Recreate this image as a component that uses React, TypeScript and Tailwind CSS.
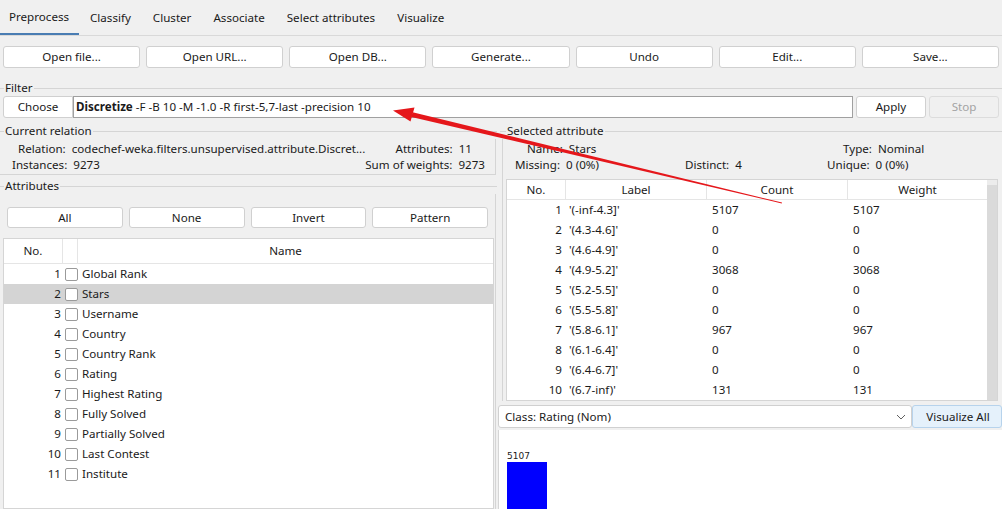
import React from 'react';

const tabs = ['Preprocess', 'Classify', 'Cluster', 'Associate', 'Select attributes', 'Visualize'];
const topButtons = ['Open file...', 'Open URL...', 'Open DB...', 'Generate...', 'Undo', 'Edit...', 'Save...'];
const attrs = [
  'Global Rank', 'Stars', 'Username', 'Country', 'Country Rank', 'Rating',
  'Highest Rating', 'Fully Solved', 'Partially Solved', 'Last Contest', 'Institute',
];
const bins = [
  ["'(-inf-4.3]'", '5107'],
  ["'(4.3-4.6]'", '0'],
  ["'(4.6-4.9]'", '0'],
  ["'(4.9-5.2]'", '3068'],
  ["'(5.2-5.5]'", '0'],
  ["'(5.5-5.8]'", '0'],
  ["'(5.8-6.1]'", '967'],
  ["'(6.1-6.4]'", '0'],
  ["'(6.4-6.7]'", '0'],
  ["'(6.7-inf)'", '131'],
];

function Btn({ label, className = '' }: { label: string; className?: string }) {
  return (
    <div className={`h-[22px] flex items-center justify-center bg-white border border-[#d0d0d0] rounded-[3px] text-[#1a1a1a] ${className}`}>
      {label}
    </div>
  );
}

function Title({ label, lead = 'w-[4px]' }: { label: string; lead?: string }) {
  return (
    <div className="flex items-center h-[16px]">
      <div className={`${lead} h-px bg-[#d5d5d5]`} />
      <span className="px-[1px] text-[#1a1a1a]">{label}</span>
      <div className="flex-1 h-px bg-[#d5d5d5]" />
    </div>
  );
}

function Arrow() {
  return (
    <svg className="absolute left-0 top-0 pointer-events-none" width="1002" height="509">
      <polygon points="412.6,112.2 782,202.6 781.8,203.4 411.4,117" fill="#e5171b" />
      <polygon points="393,110.5 414.5,107.5 410.5,121.5" fill="#e5171b" />
    </svg>
  );
}

export default function App() {
  return (
    <div className="relative w-[1002px] h-[509px] overflow-hidden bg-[#f0f0f0] font-['Noto_Sans',sans-serif] text-[11.6px] leading-none text-[#1a1a1a]">
      {/* tabs */}
      <div className="flex h-[36px] border-b border-[#d9d9d9]">
        {tabs.map((t, i) => (
          <div
            key={t}
            className={`flex items-center h-full ${i === 0 ? 'pl-[9px] pr-[10px] border-b-2 border-[#4a7db3]' : 'px-[11px]'}`}
          >
            {t}
          </div>
        ))}
      </div>

      {/* open buttons */}
      <div className="flex gap-[6px] px-[3px] pt-[10px]">
        {topButtons.map((b) => (
          <Btn key={b} label={b} className="flex-1" />
        ))}
      </div>

      {/* filter */}
      <div className="mt-[12px]">
        <Title label="Filter" />
        <div className="flex items-center px-[3px] h-[22px]">
          <Btn label="Choose" className="w-[70px] rounded-r-none" />
          <div className="flex-1 h-[22px] bg-white border border-[#a0a0a0] flex items-center px-[2px] whitespace-nowrap">
            <span className="font-bold">Discretize</span>
            <span>&nbsp;-F -B 10 -M -1.0 -R first-5,7-last -precision 10</span>
          </div>
          <Btn label="Apply" className="w-[70px] ml-[3px]" />
          <div className="w-[70px] ml-[3px] h-[22px] flex items-center justify-center border border-[#dcdcdc] rounded-[3px] text-[#a3a3a3]">
            Stop
          </div>
        </div>
      </div>

      {/* main split */}
      <div className="flex mt-[5px] h-[386px]">
        {/* left */}
        <div className="w-[497px] flex flex-col">
          <Title label="Current relation" />
          <div className="border-r border-b border-[#d5d5d5] mr-[1px] h-[36px] pt-[2px] flex flex-col">
            <div className="flex justify-between h-[16px] items-center pl-[18px] pr-[23px]">
              <span>Relation:&nbsp; codechef-weka.filters.unsupervised.attribute.Discret...</span>
              <span>Attributes:&nbsp; 11</span>
            </div>
            <div className="flex justify-between h-[16px] items-center pl-[12px] pr-[10px]">
              <span>Instances:&nbsp; 9273</span>
              <span>Sum of weights:&nbsp; 9273</span>
            </div>
          </div>
          <div className="mt-[3px]">
            <Title label="Attributes" />
          </div>
          <div className="flex-1 border-r border-[#d5d5d5] mr-[1px] flex flex-col">
            <div className="flex gap-[6px] px-[7px] pt-[13px]">
              {['All', 'None', 'Invert', 'Pattern'].map((b) => (
                <Btn key={b} label={b} className="flex-1 !h-[21px]" />
              ))}
            </div>
            <div className="mt-[10px] ml-[3px] mr-[1px] flex-1 bg-white border border-[#d5d5d5]">
              <div className="flex h-[25px] border-b border-[#e5e5e5]">
                <div className="w-[59px] flex items-center justify-center border-r border-[#e5e5e5]">No.</div>
                <div className="w-[15px] border-r border-[#e5e5e5]" />
                <div className="flex-1 flex items-center justify-center">Name</div>
              </div>
              {attrs.map((a, i) => (
                <div key={a} className={`flex h-[20px] items-center ${i === 1 ? 'bg-[#d4d4d4]' : ''}`}>
                  <div className="w-[57px] text-right">{i + 1}</div>
                  <div className="ml-[4px] w-[13px] h-[13px] bg-white border border-[#9a9a9a] rounded-[2px]" />
                  <div className="ml-[4px]">{a}</div>
                </div>
              ))}
            </div>
          </div>
        </div>

        {/* right */}
        <div className="flex-1 flex flex-col ml-[3px]">
          <Title label="Selected attribute" lead="w-[6px]" />
          <div className="ml-[2px] border-l border-[#d5d5d5] pl-[12px] flex flex-col">
            <div className="h-[36px] pt-[2px] flex flex-col">
              <div className="flex h-[16px] items-center">
                <span className="ml-[12px] w-[316px]">Name:&nbsp; Stars</span>
                <span>Type:&nbsp; Nominal</span>
              </div>
              <div className="flex h-[16px] items-center">
                <span className="w-[170px]">Missing:&nbsp; 0 (0%)</span>
                <span className="w-[142px]">Distinct:&nbsp; 4</span>
                <span>Unique:&nbsp; 0 (0%)</span>
              </div>
            </div>
            <div className="-ml-[9px] mr-[4px] mt-[4px] h-[222px] bg-white border border-[#d5d5d5] flex">
              <div className="flex-1">
                <div className="flex h-[20px] border-b border-[#e5e5e5]">
                  <div className="w-[59px] flex items-center justify-center border-r border-[#e5e5e5]">No.</div>
                  <div className="w-[141px] flex items-center justify-center border-r border-[#e5e5e5]">Label</div>
                  <div className="w-[141px] flex items-center justify-center border-r border-[#e5e5e5]">Count</div>
                  <div className="flex-1 flex items-center justify-center">Weight</div>
                </div>
                {bins.map(([l, c], i) => (
                  <div key={l} className="flex h-[20px] items-center">
                    <div className="w-[55px] text-right">{i + 1}</div>
                    <div className="w-[150px] pl-[7px]">{l}</div>
                    <div className="w-[141px]">{c}</div>
                    <div className="flex-1">{c}</div>
                  </div>
                ))}
              </div>
              <div className="w-[10px] flex flex-col">
                <div className="h-[5px] bg-[#ececec]" />
                <div className="flex-1 bg-[#dadada]" />
              </div>
            </div>
          </div>
          <div className="flex h-[23px] mt-[4px] -ml-[2px]">
            <div className="flex-1 bg-white border border-[#d0d0d0] rounded-[3px] flex items-center justify-between pl-[6px] pr-[4px]">
              <span>Class: Rating (Nom)</span>
              <svg width="10" height="6" viewBox="0 0 10 6" className="mr-[1px]">
                <path d="M1 1 L5 5 L9 1" fill="none" stroke="#606060" strokeWidth="1" />
              </svg>
            </div>
            <div className="w-[90px] bg-[#e5f1fb] border border-[#b7d3ec] rounded-[3px] flex items-center justify-center pl-[2px]">
              Visualize All
            </div>
          </div>
          <div className="flex-1 -ml-[2px] mt-[2px] bg-white border-l border-[#d5d5d5] flex flex-col pl-[8px] pt-[22px]">
            <div className="text-[9px] font-['DejaVu_Sans',sans-serif] leading-none h-[10px]">5107</div>
            <div className="w-[40px] flex-1 bg-[#0000ff]" />
          </div>
        </div>
      </div>

      <Arrow />
    </div>
  );
}
